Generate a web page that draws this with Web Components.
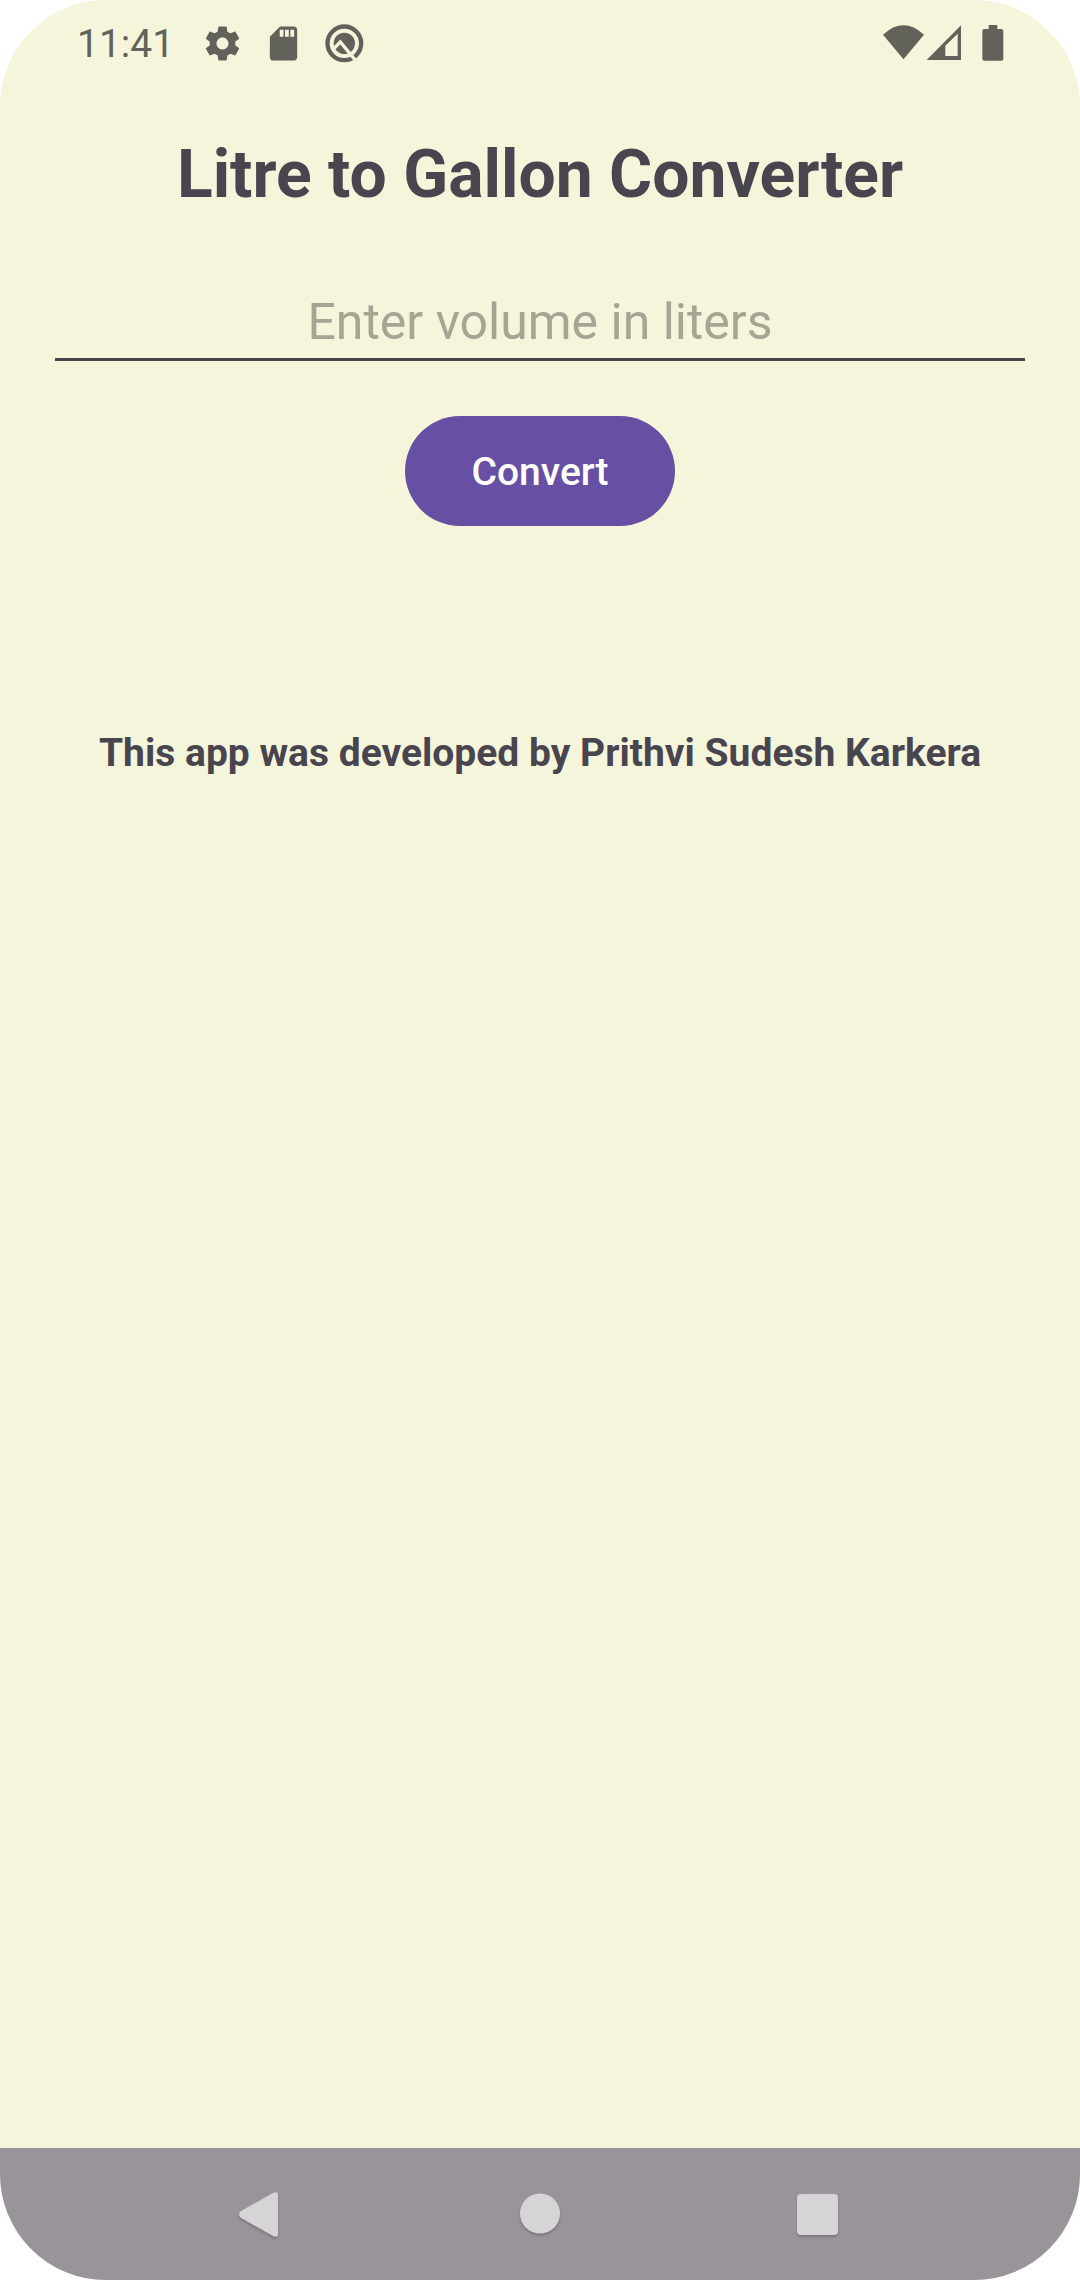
<!DOCTYPE html>
<html lang="en">
<head>
<meta charset="utf-8">
<meta name="viewport" content="width=device-width, initial-scale=1">
<title>Litre to Gallon Converter</title>
<style>
  html, body { margin: 0; height: 100%; background: #ffffff; }
  body { font-family: Roboto, "Liberation Sans", sans-serif; color: #49454f; }
</style>
</head>
<body>
<phone-screen>
  <status-bar slot="top">11:41</status-bar>
  <volume-converter>
    <span slot="title">Litre to Gallon Converter</span>
    <span slot="action">Convert</span>
    <span slot="credit">This app was developed by Prithvi Sudesh Karkera</span>
  </volume-converter>
  <nav-bar slot="bottom"></nav-bar>
</phone-screen>
<script>
class ShadowElement extends HTMLElement {
  constructor() {
    super();
    this.attachShadow({ mode: "open" }).innerHTML = this.constructor.markup;
  }
}

customElements.define("phone-screen", class extends ShadowElement {
  static markup = `
    <style>
      :host { display: flex; flex-direction: column; min-height: 100vh; background: #f5f5dc; border-radius: 106px; overflow: hidden; }
      main { flex: 1; }
    </style>
    <slot name="top"></slot>
    <main><slot></slot></main>
    <slot name="bottom"></slot>`;
});

customElements.define("status-bar", class extends ShadowElement {
  static markup = `
    <style>
      :host { display: flex; justify-content: space-between; align-items: center; height: 86px; padding: 0 76px 0 77px; color: #62625a; font-size: 39px; line-height: 46px; }
      div { display: flex; align-items: center; }
      .notices { gap: 20px; }
      .time { margin-right: 8px; padding-top: 2px; }
      .battery { margin-left: 20px; }
      svg { display: block; fill: currentColor; }
    </style>
    <div class="notices">
      <span class="time"><slot></slot></span>
      <svg width="41" height="41" viewBox="0 0 24 24"><path d="M19.43 12.98c.04-.32.07-.64.07-.98s-.03-.66-.07-.98l2.11-1.65c.19-.15.24-.42.12-.64l-2-3.46c-.12-.22-.39-.3-.61-.22l-2.49 1c-.52-.4-1.08-.73-1.69-.98l-.38-2.65C14.46 2.18 14.25 2 14 2h-4c-.25 0-.46.18-.49.42l-.38 2.65c-.61.25-1.17.59-1.69.98l-2.49-1c-.23-.09-.49 0-.61.22l-2 3.46c-.13.22-.07.49.12.64l2.11 1.65c-.04.32-.07.65-.07.98s.03.66.07.98l-2.11 1.65c-.19.15-.24.42-.12.64l2 3.46c.12.22.39.3.61.22l2.49-1c.52.4 1.08.73 1.69.98l.38 2.65c.03.24.24.42.49.42h4c.25 0 .46-.18.49-.42l.38-2.65c.61-.25 1.17-.59 1.69-.98l2.49 1c.23.09.49 0 .61-.22l2-3.46c.12-.22.07-.49-.12-.64l-2.11-1.65zM12 15.5c-1.93 0-3.5-1.57-3.5-3.5s1.57-3.5 3.5-3.5 3.5 1.57 3.5 3.5-1.57 3.5-3.5 3.5z"/></svg>
      <svg width="41" height="41" viewBox="0 0 24 24"><path fill-rule="evenodd" d="M18 2h-8L4.02 8 4 20c0 1.1.9 2 2 2h12c1.1 0 2-.9 2-2V4c0-1.1-.9-2-2-2zM9.8 4h2.2v4H9.8zM12.9 4h2.2v4h-2.2zM16 4h2.2v4H16z"/></svg>
      <svg width="41" height="41" viewBox="0 0 123 123">
        <circle cx="61" cy="61" r="50.500" fill="none" stroke="currentColor" stroke-width="13"/>
        <circle cx="61" cy="61" r="32"/>
        <path d="M24 82L49 57L100 119" fill="none" stroke="#f5f5dc" stroke-width="10"/>
      </svg>
    </div>
    <div>
      <svg width="41" height="36" viewBox="0 0 123 108"><path d="M0 29Q61 -27 123 29L61.500 103Z"/></svg>
      <svg width="38" height="36" viewBox="0 0 114 108"><path fill-rule="evenodd" d="M8 105L111 1V105ZM64 62V93H101V26Z"/></svg>
      <svg class="battery" width="22" height="36" viewBox="0 0 66 108"><path d="M20 0H46V12H58Q64 12 64 18V101Q64 107 58 107H7Q1 107 1 101V18Q1 12 7 12H20Z"/></svg>
    </div>`;
});

customElements.define("volume-converter", class extends ShadowElement {
  static markup = `
    <style>
      :host { display: block; padding: 44px 55px; }
      form { display: flex; flex-direction: column; align-items: center; margin: 0; }
      h1 { margin: 0; font-size: 66px; line-height: 90px; font-weight: 700; text-align: center; }
      input { box-sizing: border-box; width: 100%; height: 86px; margin: 55px 0; padding: 18px 0 8px; border: 0; border-bottom: 3px solid #49454f; border-radius: 0; outline: 0; background: none; color: inherit; font: 50px/57px Roboto, "Liberation Sans", sans-serif; text-align: center; }
      input::placeholder { color: #a5a594; opacity: 1; }
      button { height: 110px; padding: 2px 66px 0; border: 0; border-radius: 55px; background: #6750a4; color: #ffffff; font: 500 39px/46px Roboto, "Liberation Sans", sans-serif; cursor: pointer; }
      output { min-height: 91px; margin: 55px 0; font-size: 50px; line-height: 60px; }
      p { margin: 0; font-size: 39px; line-height: 52px; font-weight: 700; text-align: center; }
    </style>
    <form>
      <h1><slot name="title"></slot></h1>
      <input type="text" inputmode="decimal" id="litres" aria-label="Enter volume in liters" placeholder="Enter volume in liters">
      <button type="submit"><slot name="action"></slot></button>
      <output for="litres"></output>
      <p><slot name="credit"></slot></p>
    </form>`;
  connectedCallback() {
    const root = this.shadowRoot;
    root.querySelector("form").addEventListener("submit", event => {
      event.preventDefault();
      const litres = parseFloat(root.querySelector("input").value);
      root.querySelector("output").value = Number.isFinite(litres) ? (litres * 0.264172).toFixed(2) + " gallons" : "";
    });
  }
});

customElements.define("nav-bar", class extends ShadowElement {
  static markup = `
    <style>
      :host { display: block; background: #999499; }
      nav { display: flex; justify-content: space-between; align-items: center; height: 132px; padding: 0 216px; }
      button { display: block; padding: 0; border: 0; background: none; cursor: pointer; }
      svg { display: block; fill: #d6d4d7; filter: drop-shadow(0 2px 1px rgba(0,0,0,.2)); }
    </style>
    <nav>
      <button aria-label="Back"><svg width="92" height="48" viewBox="0 0 92 48"><path d="M25 21L57 3Q62 1 62 5V44Q62 48 57 46L25 28Q21 24.500 25 21Z"/></svg></button>
      <button aria-label="Home"><svg width="92" height="48" viewBox="0 0 92 48"><circle cx="46" cy="23.500" r="20"/></svg></button>
      <button aria-label="Recent apps"><svg width="92" height="48" viewBox="0 0 92 48"><rect x="25" y="4" width="41" height="41" rx="4"/></svg></button>
    </nav>`;
});
</script>
</body>
</html>
